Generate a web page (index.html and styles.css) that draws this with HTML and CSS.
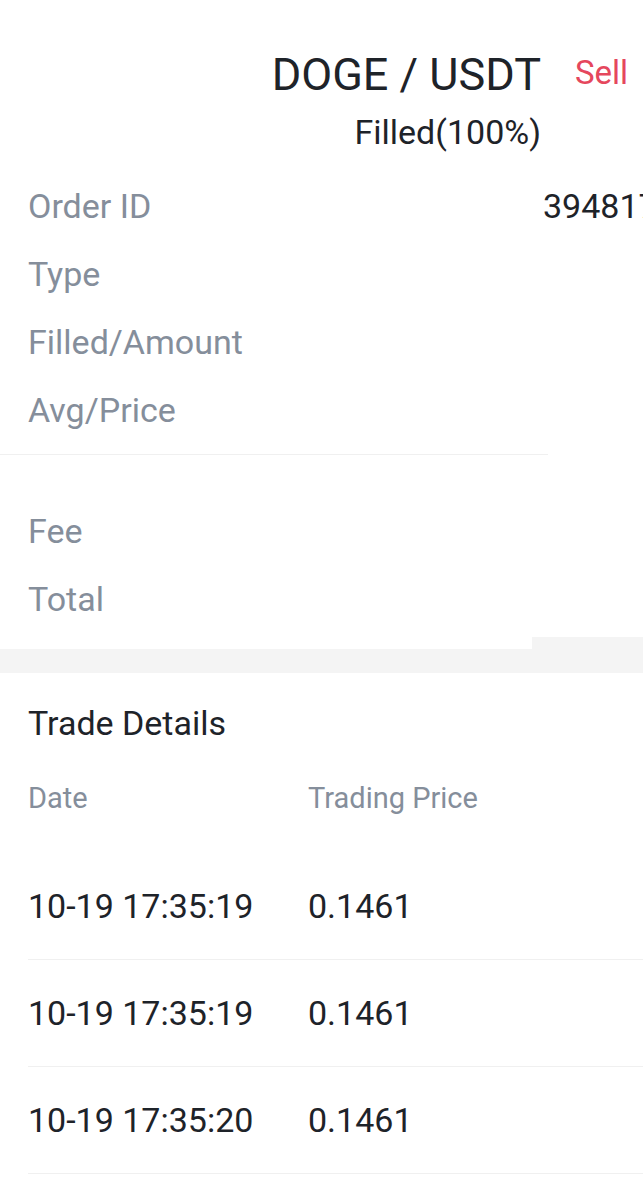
FILE: index.html
```html
<!DOCTYPE html>
<html lang="en">
<head>
    <meta charset="UTF-8">
    <meta name="viewport" content="width=device-width, initial-scale=1.0">
    <title>Order Details</title>
    <link rel="stylesheet" href="styles.css">
</head>
<body>
    <div class="page">
        <!-- Pair and order status -->
        <header class="order-head">
            <h1 class="pair">DOGE / USDT</h1>
            <span class="side sell">Sell</span>
            <div class="status">Filled(100%)</div>
        </header>

        <section class="info info-main">
            <div class="info-row">
                <span class="label">Order ID</span>
                <span class="value">394817</span>
            </div>
            <div class="info-row">
                <span class="label">Type</span>
            </div>
            <div class="info-row">
                <span class="label">Filled/Amount</span>
            </div>
            <div class="info-row">
                <span class="label">Avg/Price</span>
            </div>
        </section>

        <section class="info info-fee">
            <div class="info-row">
                <span class="label">Fee</span>
            </div>
            <div class="info-row">
                <span class="label">Total</span>
            </div>
        </section>

        <div class="section-gap"></div>

        <!-- Trades -->
        <section class="trades">
            <h2 class="trades-title">Trade Details</h2>
            <div class="trade-head">
                <span>Date</span>
                <span>Trading Price</span>
            </div>
            <div class="trade-row">
                <span>10-19 17:35:19</span>
                <span>0.1461</span>
            </div>
            <div class="trade-row">
                <span>10-19 17:35:19</span>
                <span>0.1461</span>
            </div>
            <div class="trade-row">
                <span>10-19 17:35:20</span>
                <span>0.1461</span>
            </div>
        </section>
    </div>
</body>
</html>
```

FILE: styles.css
```css
body {
    margin: 0;
    padding: 0;
    background: #ffffff;
    font-family: Roboto, "Noto Sans", sans-serif;
    color: #1e2329;
    overflow-x: hidden;
}

.page {
    width: 643px;
}

.order-head {
    display: grid;
    grid-template-columns: 541px auto;
    column-gap: 34px;
    padding-top: 48px;
}

.pair {
    margin: 0;
    font-size: 45px;
    font-weight: 400;
    line-height: 54px;
    text-align: right;
    color: #1e2329;
}

.side {
    font-size: 33px;
    line-height: 54px;
    margin-top: -2px;
}

.sell {
    color: #e5475d;
}

.status {
    grid-column: 1;
    margin-top: 10px;
    font-size: 34px;
    line-height: 40px;
    text-align: right;
    white-space: nowrap;
}

.info {
    padding-left: 28px;
}

.info-main {
    width: 520px;
    margin-top: 20px;
    padding-bottom: 10px;
    border-bottom: 1px solid #f0f0f0;
}

.info-fee {
    padding-top: 42px;
    padding-bottom: 16px;
    background: linear-gradient(#f4f4f4, #f4f4f4) right bottom / 111px 12px no-repeat;
}

.info-row {
    display: grid;
    grid-template-columns: 515px auto;
    font-size: 34px;
    line-height: 68px;
    white-space: nowrap;
}

.label {
    color: #858e9b;
}

.value {
    color: #1e2329;
}

.section-gap {
    height: 24px;
    background: #f4f4f4;
}

.trades {
    padding: 16px 0 0 28px;
}

.trades-title {
    margin: 0;
    font-size: 34px;
    font-weight: 400;
    line-height: 68px;
}

.trade-head,
.trade-row {
    display: grid;
    grid-template-columns: 280px auto;
    white-space: nowrap;
}

.trade-head {
    margin-top: 16px;
    padding-bottom: 30px;
    font-size: 29px;
    line-height: 50px;
    color: #858e9b;
}

.trade-row {
    font-size: 34px;
    line-height: 106px;
    border-bottom: 1px solid #f0f0f0;
}
```
